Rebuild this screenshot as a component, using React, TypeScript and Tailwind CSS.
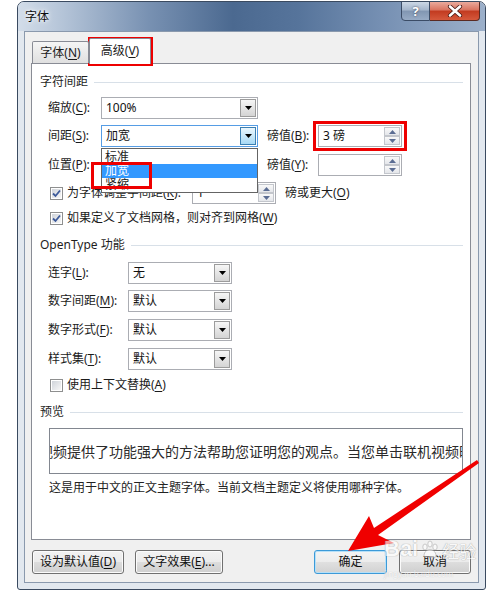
import React from "react";

function U({ children }: { children: React.ReactNode }) {
  return <span className="underline decoration-1 underline-offset-[2px]">{children}</span>;
}

function DownTri() {
  return (
    <svg width="7" height="4" viewBox="0 0 7 4">
      <path d="M0 0H7L3.5 4Z" fill="#000" />
    </svg>
  );
}

function Combo({ value, w, focus }: { value: string; w: string; focus?: boolean }) {
  return (
    <div
      className={
        focus
          ? `${w} h-[22px] flex border border-[#569de5] bg-white`
          : `${w} h-[22px] flex border border-[#abadb3] bg-white`
      }
    >
      <div className="flex-1 flex items-center pl-[4px] text-[12px] text-[#111]">{value}</div>
      <div
        className={
          focus
            ? "w-[16px] m-px flex items-center justify-center border border-[#3c7fb1] bg-linear-to-b from-[#eaf6fd] to-[#a7d9f5]"
            : "w-[16px] m-px flex items-center justify-center border border-[#9c9c9c] bg-linear-to-b from-[#f6f6f6] to-[#d4d4d4]"
        }
      >
        <DownTri />
      </div>
    </div>
  );
}

function SpinBtn({ up }: { up?: boolean }) {
  return (
    <div className="flex-1 flex items-center justify-center border border-[#c3c6cc] bg-linear-to-b from-[#f9f9f9] to-[#e4e6ea]">
      <svg width="7" height="4" viewBox="0 0 7 4">
        {up ? <path d="M0 4H7L3.5 0Z" fill="#5b6d93" /> : <path d="M0 0H7L3.5 4Z" fill="#5b6d93" />}
      </svg>
    </div>
  );
}

function Spin({ value, w }: { value: string; w: string }) {
  return (
    <div className={`${w} h-[22px] flex border border-[#abadb3] bg-white`}>
      <div className="flex-1 flex items-center pl-[4px] text-[12px] text-[#111]">{value}</div>
      <div className="w-[16px] m-px flex flex-col">
        <SpinBtn up />
        <SpinBtn />
      </div>
    </div>
  );
}

function Check({ checked }: { checked?: boolean }) {
  return (
    <div className="w-[13px] h-[13px] border border-[#8e8f8f] bg-white p-px shrink-0">
      <div className="w-full h-full bg-linear-to-br from-[#d0d4da] to-[#f7f7f7] flex items-center justify-center">
        {checked ? (
          <svg width="9" height="9" viewBox="0 0 9 9">
            <path d="M1 4.5L3.5 7L8 1.5" stroke="#3d5a9a" strokeWidth="1.8" fill="none" />
          </svg>
        ) : null}
      </div>
    </div>
  );
}

function Section({ title }: { title: React.ReactNode }) {
  return (
    <div className="h-[16px] flex items-center pl-[8px] pr-[7px] gap-[6px] text-[12px] text-[#1e1e1e]">
      <span className="whitespace-nowrap">{title}</span>
      <div className="flex-1 h-px bg-[#d8e0e8]" />
    </div>
  );
}

function Btn({ children, w, def }: { children: React.ReactNode; w: string; def?: boolean }) {
  return (
    <div
      className={
        def
          ? `${w} h-[24px] rounded-[3px] border border-[#3c9ad8] shadow-[inset_0_0_0_1px_#b6e0f8] bg-[linear-gradient(to_bottom,#f4f4f4_0%,#ececec_50%,#e0e0e0_50%,#d2d2d2_100%)] flex items-center justify-center text-[12px] text-[#111]`
          : `${w} h-[24px] rounded-[3px] border border-[#707070] shadow-[inset_0_0_0_1px_#fbfbfb] bg-[linear-gradient(to_bottom,#f2f2f2_0%,#ebebeb_50%,#dddddd_50%,#cfcfcf_100%)] flex items-center justify-center text-[12px] text-[#111]`
      }
    >
      {children}
    </div>
  );
}

export default function App() {
  return (
    <div className="relative w-[500px] h-[592px] bg-white overflow-hidden font-[family-name:'Noto_Sans','Noto_Sans_CJK_SC',sans-serif] text-[12px] leading-none text-[#1b1b1b]">
      {/* window */}
      <div className="ml-[17px] mt-[1px] w-[469px] h-[589px] rounded-t-[7px] rounded-b-[3px] border border-[#3a4a60] bg-[#e2e8ef] flex flex-col overflow-hidden">
        {/* title bar */}
        <div className="h-[29px] shrink-0 flex items-start bg-[linear-gradient(to_right,#d3dde9_0%,#b3c3d7_10%,#7891b2_28%,#4b6990_46%,#56749b_60%,#7690b3_78%,#9cb0ca_100%)]">
          <div className="ml-[7px] mt-[8px] text-[12px] leading-[14px] text-[#0c0c0c] [text-shadow:0_0_6px_#ffffff,0_0_3px_#ffffff]">
            字体
          </div>
          <div className="flex-1" />
          <div className="mr-[5px] -mt-px flex h-[20px]">
            <div className="w-[29px] h-full rounded-bl-[4px] border border-[#3b4c66] bg-[linear-gradient(to_bottom,#ccd7e5_0%,#a4b5cb_45%,#8196b2_50%,#97abc5_100%)] flex items-center justify-center text-white font-bold text-[13px] [text-shadow:0_0_2px_#334]">
              ?
            </div>
            <div className="w-[50px] h-full rounded-br-[4px] border border-l-0 border-[#5a2a22] bg-[linear-gradient(to_bottom,#eaaa9c_0%,#d9735f_45%,#c23a20_50%,#d5593c_100%)] flex items-center justify-center">
              <svg width="16" height="12" viewBox="0 0 16 12">
                <path d="M3 1.5L13 10.5M13 1.5L3 10.5" stroke="#4a1a14" strokeWidth="4.2" strokeLinecap="round" />
                <path d="M3 1.5L13 10.5M13 1.5L3 10.5" stroke="#ffffff" strokeWidth="2.6" strokeLinecap="round" />
              </svg>
            </div>
          </div>
        </div>

        {/* client */}
        <div className="mx-[6px] mb-[6px] flex-1 border border-[#8a99ad] bg-[#f0f0f0] flex flex-col">
          {/* tabs */}
          <div className="relative z-10 h-[26px] mt-[6px] pl-[7px] flex items-end">
            <div className="w-[57px] h-[22px] mb-px rounded-t-[2px] border border-b-0 border-[#898c95] bg-linear-to-b from-[#f5f5f5] to-[#e0e0e0] flex items-center justify-center text-[12px]">
              字体(<U>N</U>)
            </div>
            <div className="w-[62px] h-[26px] rounded-t-[2px] border border-b-0 border-[#898c95] bg-white flex items-center justify-center text-[12px] pb-[1px]">
              高级(<U>V</U>)
            </div>
          </div>

          {/* panel */}
          <div className="ml-[6px] mr-[7px] -mt-px h-[477px] shrink-0 border border-[#898c95] bg-white flex flex-col">
            <div className="mt-[10px]">
              <Section title="字符间距" />
            </div>

            <div className="mt-[7px] h-[22px] flex items-center pl-[16px]">
              <div className="w-[53px]">
                缩放(<U>C</U>):
              </div>
              <Combo value="100%" w="w-[157px]" />
            </div>

            <div className="mt-[6px] h-[22px] flex items-center pl-[16px]">
              <div className="w-[53px]">
                间距(<U>S</U>):
              </div>
              <Combo value="加宽" w="w-[157px]" focus />
              <div className="ml-[9px] w-[51px]">
                磅值(<U>B</U>):
              </div>
              <Spin value="3 磅" w="w-[84px]" />
            </div>

            <div className="mt-[7px] h-[22px] flex items-center pl-[16px]">
              <div className="w-[53px]">
                位置(<U>P</U>):
              </div>
              <Combo value="" w="w-[157px]" />
              <div className="ml-[9px] w-[51px]">
                磅值(<U>Y</U>):
              </div>
              <Spin value="" w="w-[84px]" />
            </div>

            <div className="mt-[6px] h-[22px] flex items-center pl-[18px]">
              <Check checked />
              <div className="ml-[4px] w-[125px] whitespace-nowrap">
                为字体调整字间距(<U>K</U>):
              </div>
              <Spin value="1" w="w-[84px]" />
              <div className="ml-[9px]">
                磅或更大(<U>O</U>)
              </div>
            </div>

            <div className="mt-[5px] h-[18px] flex items-center pl-[18px]">
              <Check checked />
              <div className="ml-[4px] whitespace-nowrap">
                如果定义了文档网格，则对齐到网格(<U>W</U>)
              </div>
            </div>

            <div className="mt-[10px]">
              <Section title="OpenType 功能" />
            </div>

            <div className="mt-[9px] h-[22px] flex items-center pl-[16px]">
              <div className="w-[80px]">
                连字(<U>L</U>):
              </div>
              <Combo value="无" w="w-[104px]" />
            </div>
            <div className="mt-[6px] h-[22px] flex items-center pl-[16px]">
              <div className="w-[80px]">
                数字间距(<U>M</U>):
              </div>
              <Combo value="默认" w="w-[104px]" />
            </div>
            <div className="mt-[7px] h-[22px] flex items-center pl-[16px]">
              <div className="w-[80px]">
                数字形式(<U>F</U>):
              </div>
              <Combo value="默认" w="w-[104px]" />
            </div>
            <div className="mt-[7px] h-[22px] flex items-center pl-[16px]">
              <div className="w-[80px]">
                样式集(<U>T</U>):
              </div>
              <Combo value="默认" w="w-[104px]" />
            </div>

            <div className="mt-[7px] h-[16px] flex items-center pl-[18px]">
              <Check />
              <div className="ml-[4px] whitespace-nowrap">
                使用上下文替换(<U>A</U>)
              </div>
            </div>

            <div className="mt-[11px]">
              <Section title="预览" />
            </div>

            <div className="mt-[8px] ml-[17px] w-[414px] h-[46px] border border-[#828790] bg-white overflow-hidden flex items-center justify-center">
              <div className="whitespace-nowrap text-[14px] leading-[16px] text-[#2a2a2a] font-[family-name:'Noto_Sans_CJK_SC',sans-serif]">
                视频提供了功能强大的方法帮助您证明您的观点。当您单击联机视频时
              </div>
            </div>

            <div className="mt-[7px] ml-[17px] h-[14px] flex items-center whitespace-nowrap text-[#222]">
              这是用于中文的正文主题字体。当前文档主题定义将使用哪种字体。
            </div>
          </div>

          {/* buttons */}
          <div className="mt-[10px] px-[7px] flex items-center">
            <Btn w="w-[92px]">
              设为默认值(<U>D</U>)
            </Btn>
            <div className="ml-[11px]">
              <Btn w="w-[88px]">
                文字效果(<U>E</U>)...
              </Btn>
            </div>
            <div className="flex-1" />
            <Btn w="w-[73px]" def>
              确定
            </Btn>
            <div className="ml-[12px]">
              <Btn w="w-[72px]">取消</Btn>
            </div>
          </div>
        </div>
      </div>

      {/* open dropdown list */}
      <div className="absolute left-[101px] top-[148px] w-[157px] h-[45px] border border-[#646464] bg-white flex flex-col pt-px">
        <div className="h-[14px] flex items-center pl-[3px]">标准</div>
        <div className="h-[14px] flex items-center pl-[3px] bg-[#3399ff] text-white">加宽</div>
        <div className="h-[14px] flex items-center pl-[3px]">紧缩</div>
      </div>

      {/* red highlight boxes */}
      <div className="absolute left-[88px] top-[37px] w-[65px] h-[29px] border-[3px] border-[#ee0000]" />
      <div className="absolute left-[91px] top-[162px] w-[61px] h-[27px] border-[3px] border-[#ee0000]" />
      <div className="absolute left-[313px] top-[121px] w-[94px] h-[30px] border-[3px] border-[#ee0000]" />

      {/* arrow */}
      <svg className="absolute left-0 top-0 pointer-events-none" width="500" height="592" viewBox="0 0 500 592">
        <polygon
          points="348,551 369,516 374,528 477,460 479,463 378,535 394,543"
          fill="#f00000"
        />
      </svg>

      {/* watermark */}
      <div className="absolute left-[384px] top-[538px] flex items-end gap-[2px] opacity-60 pointer-events-none text-white [text-shadow:0_0_1px_#8a8a8a,0_0_1px_#8a8a8a]">
        <span className="text-[22px] font-bold leading-none font-[family-name:'Liberation_Sans',sans-serif]">Bai</span>
        <svg width="20" height="20" viewBox="0 0 20 20">
          <g fill="#ffffff" stroke="#9a9a9a" strokeWidth="0.8">
            <ellipse cx="5" cy="7" rx="2.2" ry="3" />
            <ellipse cx="10" cy="4" rx="2.2" ry="3" />
            <ellipse cx="15" cy="7" rx="2.2" ry="3" />
            <path d="M4 16C4 11 8 9.5 10 9.5S16 11 16 16C16 18 13 18 10 17S4 18 4 16Z" />
          </g>
        </svg>
        <span className="text-[17px] leading-none">经验</span>
      </div>
      <div className="absolute left-[384px] top-[570px] text-[8px] leading-none text-white opacity-60 [text-shadow:0_0_1px_#9a9a9a] pointer-events-none">
        jingyan.baidu.com
      </div>
    </div>
  );
}
